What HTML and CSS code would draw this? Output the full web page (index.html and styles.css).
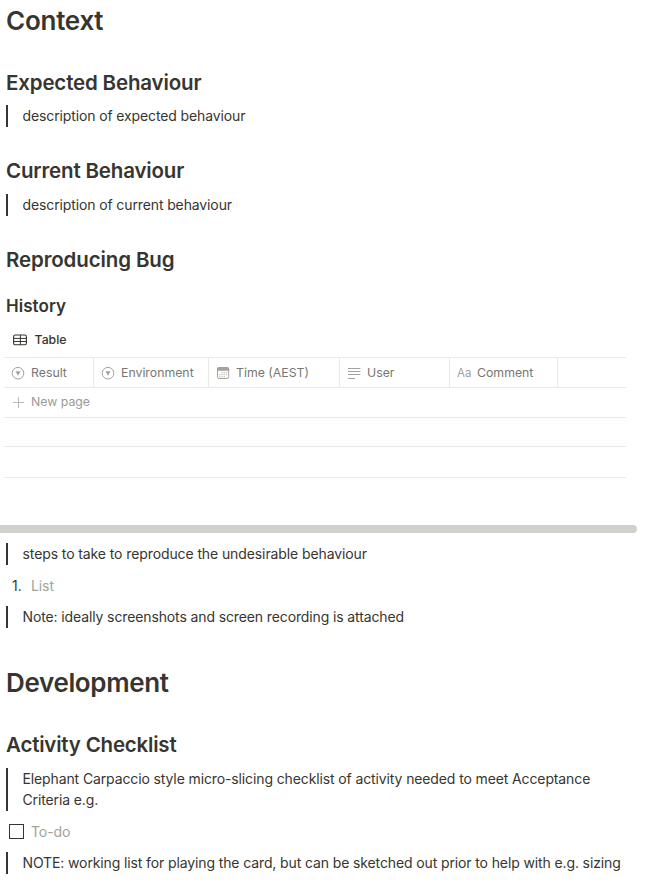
FILE: index.html
```html
<!DOCTYPE html>
<html lang="en">
<head>
<meta charset="utf-8">
<title>Context</title>
<link rel="stylesheet" href="styles.css">
</head>
<body>
<main class="page">
  <h1 class="title context"><span>Context</span></h1>
  <h2 class="heading expected"><span>Expected Behaviour</span></h2>
  <blockquote class="quote"><span>description of expected behaviour</span></blockquote>
  <h2 class="heading current"><span>Current Behaviour</span></h2>
  <blockquote class="quote current-note"><span>description of current behaviour</span></blockquote>
  <h2 class="heading reproducing"><span>Reproducing Bug</span></h2>
  <h3 class="subheading"><span>History</span></h3>

  <section class="database">
    <div class="view-tab">
      <svg class="view-icon" width="14" height="12" viewBox="0 0 14 12" fill="none" stroke="currentColor"><rect x=".6" y="1" width="12.8" height="9.8" rx="1.6" stroke-width="1.1"/><path d="M.6 4.4h12.8M.6 7.5h12.8M7.4 1v10" stroke-width="1"/></svg>
      <span>Table</span>
    </div>
    <div class="table">
      <div class="row header">
        <div class="cell">
          <svg class="icon" width="14" height="14" viewBox="0 0 14 14"><circle cx="7" cy="7.2" r="5.8" fill="none" stroke="currentColor" stroke-width="1"/><path d="M4.4 5.3h5.2L7 9.8z" fill="currentColor"/></svg>
          <span>Result</span>
        </div>
        <div class="cell">
          <svg class="icon" width="14" height="14" viewBox="0 0 14 14"><circle cx="7" cy="7.2" r="5.8" fill="none" stroke="currentColor" stroke-width="1"/><path d="M4.4 5.3h5.2L7 9.8z" fill="currentColor"/></svg>
          <span>Environment</span>
        </div>
        <div class="cell">
          <svg class="icon" width="14" height="14" viewBox="0 0 14 14"><rect x="1.5" y="1.7" width="11.2" height="10.8" rx="1.8" fill="none" stroke="currentColor" stroke-width="1"/><path d="M1 4.8V3a2 2 0 0 1 2-2h8.2a2 2 0 0 1 2 2v1.8z" fill="currentColor"/><path d="M5.5 6.7h6M3.3 8.7h8.2M3.3 10.7h6" fill="none" stroke="currentColor" stroke-width="1" stroke-dasharray="1 1.2"/></svg>
          <span>Time (AEST)</span>
        </div>
        <div class="cell">
          <svg class="icon" width="14" height="14" viewBox="0 0 14 14" fill="none" stroke="currentColor"><path d="M1 2.5h12.4M1 5.5h12.4M1 8.5h12.4M1 12.5h7" stroke-width="1"/></svg>
          <span>User</span>
        </div>
        <div class="cell">
          <span class="title-icon">Aa</span>
          <span>Comment</span>
        </div>
        <div class="cell"></div>
      </div>
      <div class="row new-page">
        <svg class="icon plus" width="14" height="14" viewBox="0 0 14 14"><path d="M7.5 2v11M2 7.5h11" fill="none" stroke="currentColor"/></svg>
        <span>New page</span>
      </div>
      <div class="row short"></div>
      <div class="row"></div>
    </div>
  </section>
  <div class="scrollbar"></div>

  <blockquote class="quote steps"><span>steps to take to reproduce the undesirable behaviour</span></blockquote>
  <div class="list-item"><span class="marker">1.</span><span class="placeholder">List</span></div>
  <blockquote class="quote"><span>Note: ideally screenshots and screen recording is attached</span></blockquote>
  <h1 class="title development"><span>Development</span></h1>
  <h2 class="heading activity"><span>Activity Checklist</span></h2>
  <blockquote class="quote double"><span>Elephant Carpaccio style micro-slicing checklist of activity needed to meet Acceptance<br>Criteria e.g.</span></blockquote>
  <div class="todo"><span class="checkbox"></span><span class="placeholder">To-do</span></div>
  <blockquote class="quote"><span>NOTE: working list for playing the card, but can be sketched out prior to help with e.g. sizing</span></blockquote>
</main>
</body>
</html>
```
FILE: styles.css
```css
* { box-sizing: border-box; }
body {
  margin: 0;
  background: #fff;
  color: #37352f;
  font-family: Inter, "Liberation Sans", sans-serif;
  font-size: 14px;
}
.page { display: flow-root; height: 892px; overflow: hidden; }
h1, h2, h3, blockquote { margin: 0; white-space: nowrap; }
h1, h2, h3 { padding-left: 6px; font-weight: 630; }
.title { margin-top: 4px; font-size: 26px; line-height: 34px; letter-spacing: -0.35px; }
.context { letter-spacing: -0.25px; }
.heading { font-size: 20.5px; line-height: 28px; letter-spacing: -0.16px; }
.expected { margin-top: 31px; }
.quote {
  margin: 8px 0 0 6px;
  padding-left: 14.5px;
  border-left: 2px solid #37352f;
  line-height: 22px;
  letter-spacing: -0.12px;
}
.current { margin-top: 30px; }
.current-note { margin-top: 9px; }
.reproducing { margin-top: 30px; letter-spacing: -0.12px; }
.subheading { margin-top: 20px; font-size: 17px; line-height: 24px; letter-spacing: 0.05px; }
.database { width: 622px; margin-left: 4px; font-size: 12.3px; }
.view-tab {
  display: flex;
  align-items: center;
  height: 39px;
  padding: 4px 0 0 9px;
  gap: 7.5px;
  font-weight: 500;
}
.table { border-top: 1px solid #e9e9e7; }
.row { display: flex; height: 31px; border-bottom: 1px solid #e9e9e7; }
.header {
  display: grid;
  grid-template-columns: 90px 115px 131px 110px 108px 1fr;
  height: 30px;
  color: #787774;
}
.cell {
  display: flex;
  align-items: center;
  padding-left: 7px;
  gap: 6px;
  border-right: 1px solid #e9e9e7;
  white-space: nowrap;
}
.cell:last-child { border-right: 0; }
.icon { flex: none; color: #a3a29d; }
.plus { color: #b9b8b4; }
.title-icon { width: 14px; color: #a3a29d; font-size: 11.5px; }
.new-page { height: 30px; align-items: center; padding: 0 0 2px 7px; gap: 6px; color: #9b9a97; }
.short { height: 29px; }
.scrollbar { width: 637px; height: 8px; margin-top: 47px; border-radius: 0 4px 4px 0; background: #d1d1cb; }
.steps { margin-top: 10px; letter-spacing: -0.1px; }
.list-item, .todo { display: flex; align-items: center; }
.list-item { height: 24px; margin-top: 8px; }
.list-item + .quote { margin-top: 9px; }
.marker { width: 31px; padding-left: 12px; }
.placeholder { color: #a3a29d; letter-spacing: -0.1px; }
.development { margin-top: 38px; }
.activity { margin-top: 31px; letter-spacing: -0.2px; }
.double { margin-top: 9px; height: 43px; line-height: 21px; }
.todo { height: 24px; margin-top: 8px; padding-left: 9px; }
.todo + .quote { margin-top: 9px; }
.checkbox { width: 15px; height: 15px; margin-right: 7px; border: 1.5px solid #37352f; }
```
